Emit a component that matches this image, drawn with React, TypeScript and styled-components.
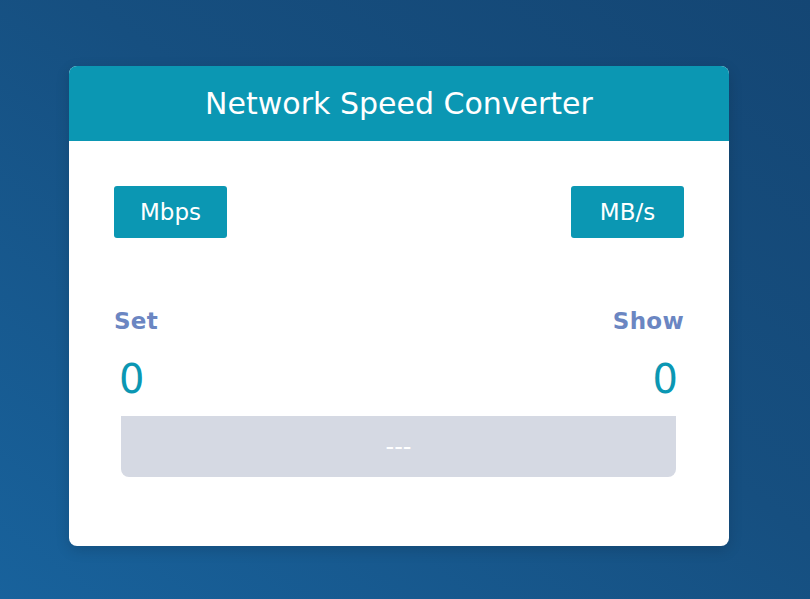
import React, { useState } from 'react';
import styled, { createGlobalStyle } from 'styled-components';

const GlobalStyle = createGlobalStyle`
  html, body {
    margin: 0;
    padding: 0;
    height: 100%;
  }

  body {
    font-family: 'DejaVu Sans', Verdana, sans-serif;
    background: linear-gradient(to top right, #18629c 0%, #164f80 55%, #144674 100%);
    min-height: 599px;
  }
`;

const Page = styled.div`
  display: flex;
  justify-content: center;
  padding: 66px 12px 0 0;
`;

const Card = styled.div`
  width: 660px;
  height: 480px;
  background: #fff;
  border-radius: 8px;
  overflow: hidden;
  box-shadow: 0 4px 14px rgba(0, 0, 0, 0.15);
  display: flex;
  flex-direction: column;
`;

const Header = styled.h1`
  margin: 0;
  height: 75px;
  display: flex;
  align-items: center;
  justify-content: center;
  background: #0b97b3;
  color: #fff;
  font-size: 30px;
  font-weight: normal;
`;

const Body = styled.div`
  padding: 45px 45px 0;
  display: flex;
  flex-direction: column;
`;

const Row = styled.div`
  display: flex;
  justify-content: space-between;
  align-items: center;
`;

const UnitButton = styled.button`
  height: 52px;
  min-width: 113px;
  padding: 0 24px;
  border: none;
  border-radius: 3px;
  background: #0b97b3;
  color: #fff;
  font-family: inherit;
  font-size: 23px;
  cursor: pointer;
`;

const Labels = styled(Row)`
  margin-top: 70px;
`;

const Label = styled.span`
  color: #6b86c2;
  font-size: 23px;
  font-weight: bold;
  letter-spacing: 0.3px;
`;

const Values = styled(Row)`
  margin-top: 22px;
  padding: 0 6px 0 5px;
`;

const Value = styled.span`
  color: #0b97b3;
  font-size: 40px;
`;

const ResultBar = styled.div`
  margin: 14px 8px 0 7px;
  height: 61px;
  display: flex;
  align-items: center;
  justify-content: center;
  background: #d5d9e3;
  border-radius: 0 0 8px 8px;
  color: #fff;
  font-size: 24px;
`;

export default function App() {
  const [from] = useState('Mbps');
  const [to] = useState('MB/s');

  return (
    <>
      <GlobalStyle />
      <Page>
        <Card>
          <Header>Network Speed Converter</Header>
          <Body>
            <Row>
              <UnitButton>{from}</UnitButton>
              <UnitButton>{to}</UnitButton>
            </Row>
            <Labels>
              <Label>Set</Label>
              <Label>Show</Label>
            </Labels>
            <Values>
              <Value>0</Value>
              <Value>0</Value>
            </Values>
            <ResultBar>---</ResultBar>
          </Body>
        </Card>
      </Page>
    </>
  );
}
